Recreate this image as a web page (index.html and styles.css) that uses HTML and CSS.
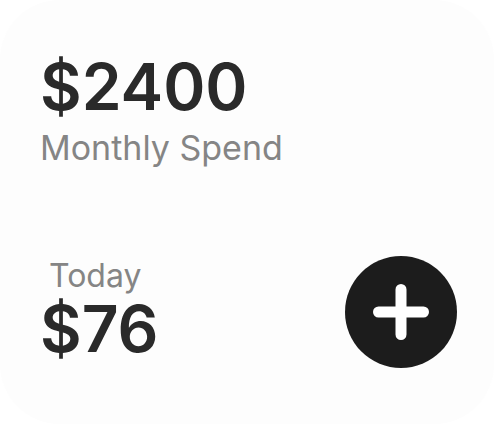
FILE: index.html
```html
<!DOCTYPE html>
<html>
<head>
<meta charset="utf-8">
<link rel="stylesheet" href="styles.css">
</head>
<body>
<div class="card">
  <div class="monthly">
    <div class="amount-big">$2400</div>
    <div class="label-big">Monthly Spend</div>
  </div>
  <div class="bottom">
    <div class="today">
      <div class="label-small">Today</div>
      <div class="amount-small">$76</div>
    </div>
    <button class="add" aria-label="Add">
      <svg width="56" height="56" viewBox="0 0 56 56">
        <path d="M28 5.5 V50.5 M5.5 28 H50.5" stroke="#fff" stroke-width="11" stroke-linecap="round" fill="none"/>
      </svg>
    </button>
  </div>
</div>
</body>
</html>
```
FILE: styles.css
```css
html, body {
  margin: 0;
  padding: 0;
  background: #ffffff;
}
body {
  width: 494px;
  height: 424px;
  font-family: Inter, "Noto Sans", sans-serif;
}
.card {
  box-sizing: border-box;
  width: 494px;
  height: 424px;
  background: #fdfdfd;
  border-radius: 60px;
  padding: 48px 37px 0 40px;
  display: flex;
  flex-direction: column;
}
.amount-big {
  font-size: 64px;
  font-weight: 600;
  color: #2a2a2a;
  line-height: 78px;
}
.label-big {
  font-size: 34px;
  color: #858585;
  line-height: 41px;
  margin-top: 1px;
}
.bottom {
  margin-top: 90px;
  display: flex;
  justify-content: space-between;
  align-items: flex-start;
}
.label-small {
  font-size: 32px;
  color: #858585;
  line-height: 36px;
  padding-left: 9px;
}
.amount-small {
  font-size: 64px;
  font-weight: 600;
  color: #2a2a2a;
  line-height: 70px;
}
.add {
  width: 112px;
  height: 112px;
  margin-top: -2px;
  border-radius: 50%;
  background: #1c1c1c;
  border: none;
  padding: 0;
  display: flex;
  align-items: center;
  justify-content: center;
}
```
